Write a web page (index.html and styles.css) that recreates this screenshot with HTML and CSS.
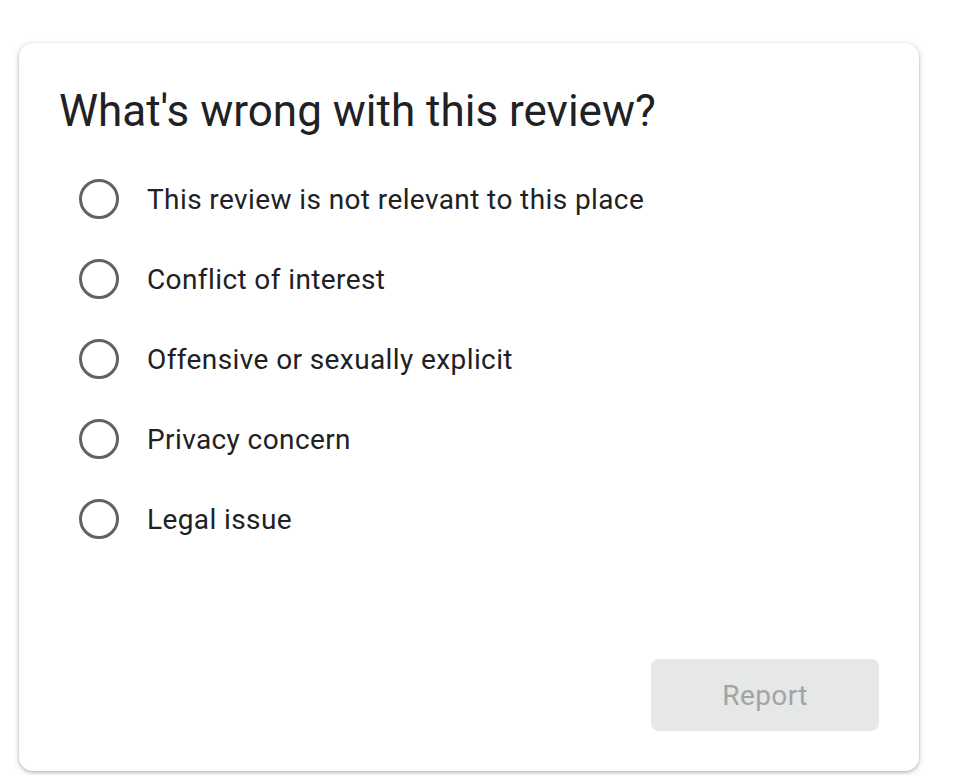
FILE: index.html
```html
<!DOCTYPE html>
<html>
<head>
<meta charset="utf-8">
<link rel="stylesheet" href="styles.css">
</head>
<body>
<div class="card">
  <h1 class="title">What's wrong with this review?</h1>
  <div class="options">
    <label class="option"><span class="radio"></span><span class="label">This review is not relevant to this place</span></label>
    <label class="option"><span class="radio"></span><span class="label">Conflict of interest</span></label>
    <label class="option"><span class="radio"></span><span class="label">Offensive or sexually explicit</span></label>
    <label class="option"><span class="radio"></span><span class="label">Privacy concern</span></label>
    <label class="option"><span class="radio"></span><span class="label">Legal issue</span></label>
  </div>
  <div class="actions">
    <button class="report" disabled>Report</button>
  </div>
</div>
</body>
</html>
```
FILE: styles.css
```css
html, body {
  margin: 0;
  padding: 0;
  background: #ffffff;
}
body {
  padding: 43px 34px 4px 19px;
  font-family: Roboto, "Liberation Sans", sans-serif;
  color: #202124;
}
.card {
  box-sizing: border-box;
  width: 900px;
  height: 728px;
  background: #fff;
  border-radius: 14px;
  box-shadow: 0 1px 3px rgba(60,64,67,0.3), 0 2px 6px 1px rgba(60,64,67,0.15);
  padding: 42px 40px 40px 40px;
  display: flex;
  flex-direction: column;
}
.title {
  margin: 0;
  font-size: 44px;
  font-weight: 400;
  line-height: 52px;
  color: #202124;
}
.options {
  display: flex;
  flex-direction: column;
  margin-top: 22px;
  padding-left: 20px;
}
.option {
  display: flex;
  align-items: center;
  height: 80px;
  gap: 28px;
}
.radio {
  box-sizing: border-box;
  width: 40px;
  height: 40px;
  border: 3px solid #5f6368;
  border-radius: 50%;
  flex: none;
}
.label {
  font-size: 28px;
  letter-spacing: 0.4px;
  color: #202124;
}
.actions {
  margin-top: auto;
  display: flex;
  justify-content: flex-end;
}
.report {
  width: 228px;
  height: 72px;
  border: none;
  border-radius: 8px;
  background: #e6e7e7;
  color: #a2a4a5;
  font-family: Roboto, "Liberation Sans", sans-serif;
  font-size: 28px;
  letter-spacing: 0.4px;
}
```
